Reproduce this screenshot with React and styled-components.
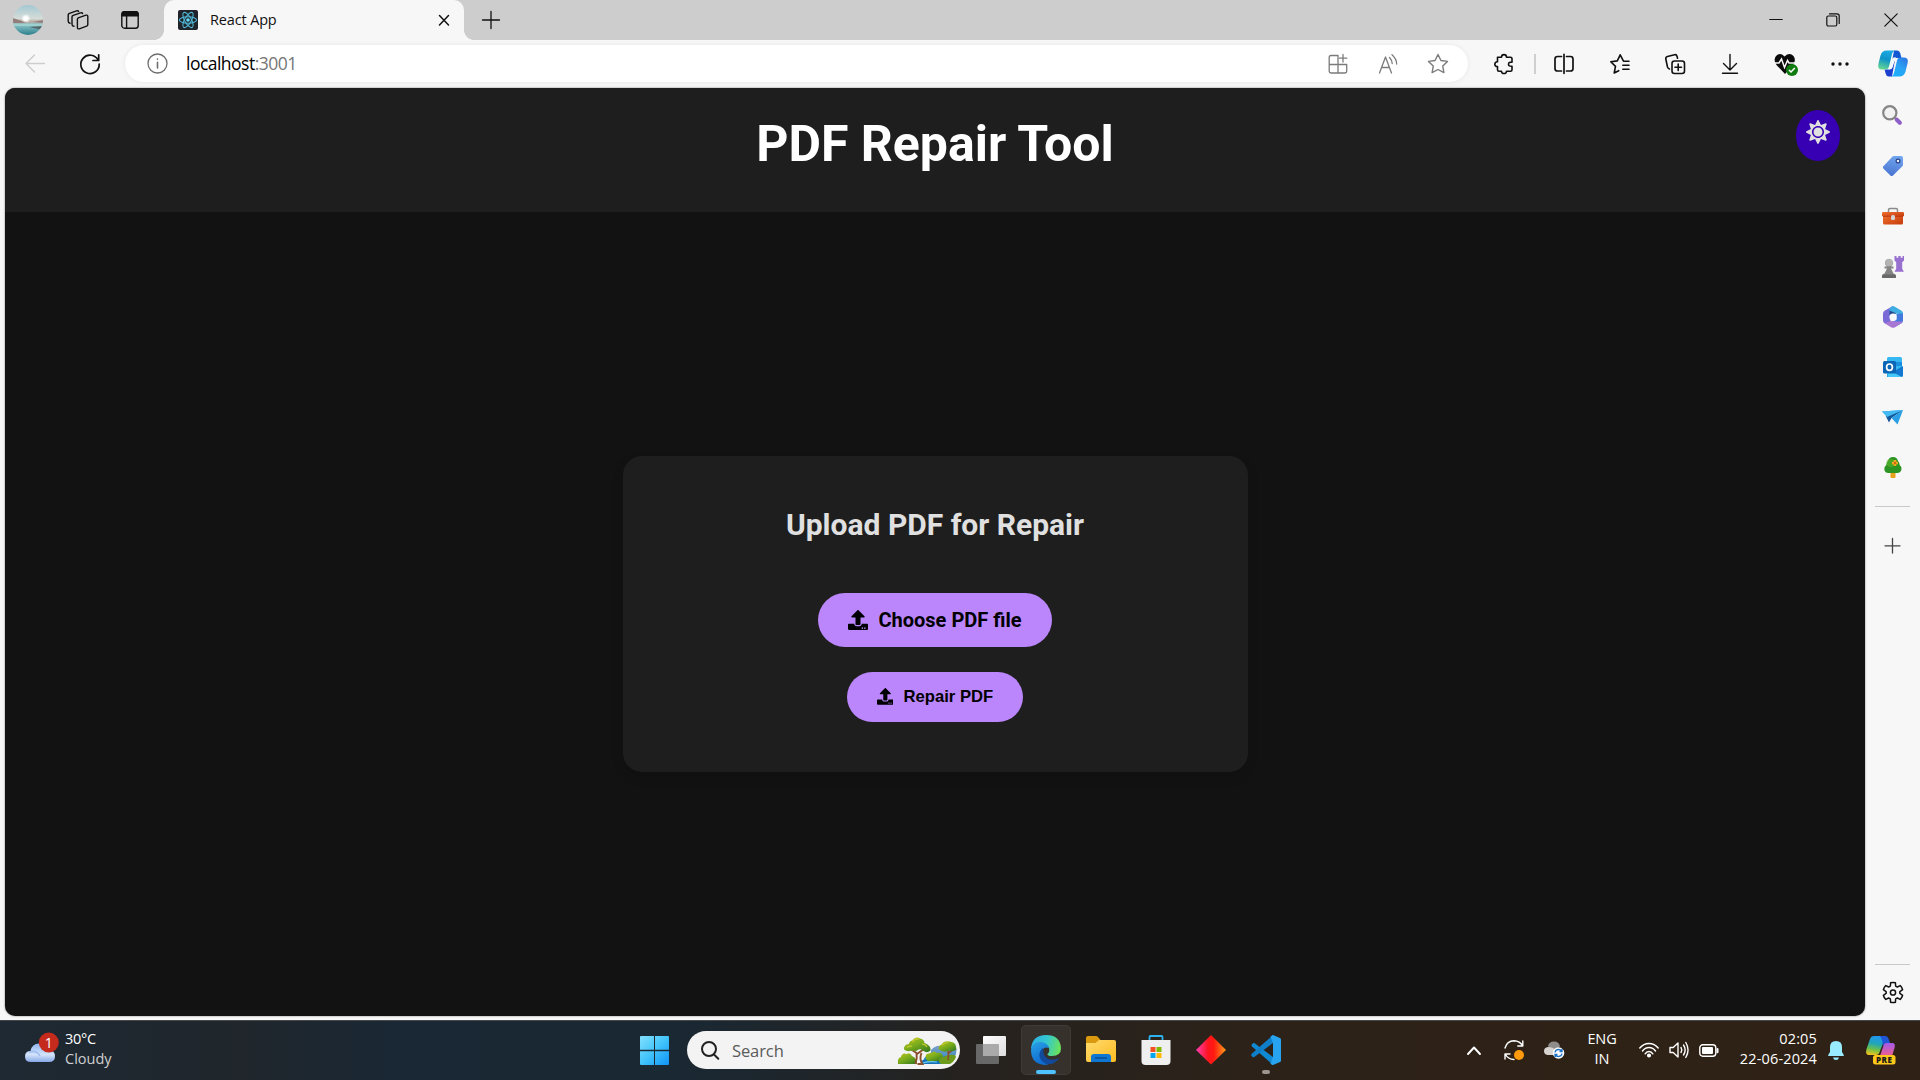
import React from "react";
import styled, { createGlobalStyle } from "styled-components";
import { FaUpload, FaSun } from "react-icons/fa";

const Global = createGlobalStyle`
  * { box-sizing: border-box; }
  body { margin: 0; background: #f7f7f7; overflow: hidden; }
  button { font-family: inherit; border: 0; padding: 0; background: none; color: inherit; }
`;

const ui = `"Open Sans", "Noto Sans", sans-serif`;

const Screen = styled.div`
  width: 1920px;
  height: 1080px;
  display: flex;
  flex-direction: column;
  background: #f7f7f7;
  font-family: ${ui};
  color: #111;
`;

const Slot = styled.div`
  width: ${(p) => p.$w}px;
  height: 100%;
  flex: none;
  display: flex;
  align-items: center;
  justify-content: center;
`;
const Spacer = styled.div`
  flex: 1;
`;
const Glyph = styled.svg`
  display: block;
  flex: none;
  overflow: visible;
  fill: none;
  stroke: ${(p) => p.$color || "#111"};
  stroke-width: ${(p) => p.$stroke || 1.4};
  stroke-linecap: round;
  stroke-linejoin: round;
`;
const Picture = styled.svg`
  display: block;
  flex: none;
  overflow: visible;
`;
const Icon = ({ w = 20, h = w, color, stroke, children }) => (
  <Glyph width={w} height={h} viewBox={`0 0 ${w} ${h}`} $color={color} $stroke={stroke}>
    {children}
  </Glyph>
);
const Art = ({ w, h = w, children }) => (
  <Picture width={w} height={h} viewBox={`0 0 ${w} ${h}`}>
    {children}
  </Picture>
);

/* ---------- title bar ---------- */
const TitleBar = styled.header`
  height: 40px;
  flex: none;
  display: flex;
  background: #cdcdcd;
`;
const Tab = styled.div`
  position: relative;
  width: 300px;
  margin-left: 3px;
  padding: 0 14px 0 14px;
  display: flex;
  align-items: center;
  background: #f7f7f7;
  border-radius: 10px 10px 0 0;
  &::before,
  &::after {
    content: "";
    position: absolute;
    bottom: 0;
    width: 10px;
    height: 10px;
  }
  &::before {
    left: -10px;
    background: radial-gradient(circle at 0 0, #cdcdcd 9.6px, #f7f7f7 10.2px);
  }
  &::after {
    right: -10px;
    background: radial-gradient(circle at 100% 0, #cdcdcd 9.6px, #f7f7f7 10.2px);
  }
`;
const TabTitle = styled.span`
  flex: 1;
  margin-left: 12px;
  font-size: 14.5px;
  letter-spacing: -0.15px;
  line-height: 20px;
`;

const Avatar = () => (
  <Art w={30}>
    <defs>
      <linearGradient id="sky" x1="0" y1="0" x2="0" y2="1">
        <stop offset="0" stopColor="#a3c8d3" />
        <stop offset=".45" stopColor="#d6dcd8" />
        <stop offset=".56" stopColor="#b9a9a0" />
        <stop offset=".64" stopColor="#8fc6c9" />
        <stop offset="1" stopColor="#2b7f8c" />
      </linearGradient>
      <clipPath id="round"><circle cx="15" cy="15" r="15" /></clipPath>
    </defs>
    <g clipPath="url(#round)">
      <rect width="30" height="30" fill="url(#sky)" />
      <path d="M0 13l9 3 5 2H0zM30 15l-10 2 10 1z" fill="#927f7c" />
      <path d="M0 19h30v2H0z" fill="#9fd0d0" />
      <path d="M30 21l-14 1 14 3z" fill="#54676b" />
      <circle cx="12.8" cy="13.5" r="4" fill="#fff" opacity=".5" />
      <circle cx="12.8" cy="13.5" r="2.5" fill="#fff" />
    </g>
  </Art>
);
const Workspaces = () => (
  <Icon w={22} h={20} stroke={1.4}>
    <path d="M11.2 7.8l7.8-2.6q1.8-.5 1.800 1.300v8q0 1.300-1.200 1.700l-7.300 2.600q-1.900.5-1.900-1.300v-8q0-1.200.8-1.700z" />
    <path d="M7 16.200q-2-.2-2-2V7q0-1.300 1.200-1.700L13.500 2.900q1.700-.4 2.100.7" />
    <path d="M3 13.300q-1.800-.4-1.800-2V5q0-1.300 1.200-1.700L9.600.9q1.600-.4 2 .6" />
  </Icon>
);
const TabActions = () => (
  <Icon w={18} h={18} stroke={1.4}>
    <rect x=".8" y=".8" width="16.400" height="16.400" rx="2.800" />
    <path d="M1 4.800V3q0-2.200 2.200-2.200h11.600Q17 .8 17 3v1.800z" fill="#111" />
    <path d="M5.600 5v12" />
  </Icon>
);
const ReactLogo = () => (
  <Art w={20}>
    <rect width="20" height="20" rx="2" fill="#20232a" />
    <g fill="none" stroke="#4fb8d6" strokeWidth="1.050">
      <ellipse cx="10" cy="10" rx="8.600" ry="3.300" />
      <ellipse cx="10" cy="10" rx="8.600" ry="3.300" transform="rotate(60 10 10)" />
      <ellipse cx="10" cy="10" rx="8.600" ry="3.300" transform="rotate(120 10 10)" />
    </g>
    <circle cx="10" cy="10" r="1.800" fill="#61dafb" />
  </Art>
);

/* ---------- tool bar ---------- */
const ToolBar = styled.nav`
  height: 48px;
  flex: none;
  display: flex;
  padding: 0 0 1px 8px;
`;
const AddressBar = styled.div`
  width: 1343px;
  height: 37px;
  margin: 5px 7px 0 7px;
  padding-left: 22px;
  flex: none;
  display: flex;
  align-items: center;
  background: #fff;
  border-radius: 19px;
  box-shadow: 0 0 5px rgba(0, 0, 0, 0.07);
`;
const Url = styled.div`
  margin-left: 18px;
  padding-bottom: 2px;
  font-size: 17.500px;
  letter-spacing: -0.52px;
  line-height: 24px;
  color: #000;
  span { color: #767676; }
`;
const Rule = styled.div`
  width: 2px;
  height: 20px;
  background: #cfcfcf;
`;

const CopilotLogo = () => (
  <Art w={30} h={27}>
    <defs>
      <linearGradient id="cpa" x1="0.3" y1="0" x2="0" y2="1">
        <stop offset="0" stopColor="#1aa8e0" />
        <stop offset=".4" stopColor="#0f93c9" />
        <stop offset="1" stopColor="#6fe08a" />
      </linearGradient>
      <linearGradient id="cpb" x1="1" y1="0" x2="0.2" y2="1">
        <stop offset="0" stopColor="#2b6fe0" />
        <stop offset=".5" stopColor="#2aa3f5" />
        <stop offset="1" stopColor="#17b2ff" />
      </linearGradient>
    </defs>
    <path d="M16 .5h3.200q2.300 0 3 2.500l1.300 5H18q-2.500 0-3.400 3L13 17z" fill="#1459d2" />
    <path d="M14 26.500h-3.200q-2.300 0-3-2.500l-1.300-4.500H11q2.500 0 3.400-3L17 10l-1.500 8z" fill="#1c3fd0" />
    <path d="M20 .5h-2.500q-2.500 0-3.500 3.500l-3 12.500q-.8 3-3.500 3H4q-5 0-3.500-6l2-8Q4 .5 8.500.5z" fill="url(#cpa)" />
    <path d="M10 26.500h2.500q2.500 0 3.500-3.500l3-12.500q.8-3 3.500-3H26q5 0 3.500 6l-2 8Q26 26.500 21.500 26.500z" fill="url(#cpb)" />
    <path d="M14.300 8.500q1-1.300 3.900-1.200-1.200 1-1.800 3.200l-1.800 7q-.6 2-3.800 2 1.200-.8 1.700-3z" fill="#f4fbff" />
  </Art>
);

/* ---------- body ---------- */
const Body = styled.div`
  height: 932px;
  flex: none;
  display: flex;
  padding-left: 5px;
`;
const Page = styled.main`
  width: 1860px;
  height: 927.500px;
  flex: none;
  display: flex;
  flex-direction: column;
  overflow: hidden;
  border-radius: 10px;
  background: #121212;
  box-shadow: 0 0 2px rgba(0, 0, 0, 0.55);
  font-family: Roboto, sans-serif;
`;
const PageHeader = styled.div`
  position: relative;
  height: 124px;
  flex: none;
  padding-top: 26px;
  background: #1e1e1e;
  text-align: center;
`;
const PageTitle = styled.h1`
  margin: 0;
  font-size: 50px;
  font-weight: 700;
  line-height: 60px;
  color: #fff;
`;
const ThemeToggle = styled.button`
  position: absolute;
  top: 22px;
  right: 25px;
  width: 44px;
  height: 50.500px;
  padding-bottom: 6px;
  display: flex;
  align-items: center;
  justify-content: center;
  border-radius: 50%;
  background: #3700b3;
  color: #e0e0e0;
  font-size: 24px;
`;
const Content = styled.div`
  flex: 1;
  display: flex;
  align-items: center;
  justify-content: center;
`;
const Card = styled.section`
  width: 625px;
  height: 316px;
  padding-top: 51px;
  display: flex;
  flex-direction: column;
  align-items: center;
  background: #1e1e1e;
  border-radius: 19px;
  box-shadow: 0 5px 12px rgba(0, 0, 0, 0.12);
`;
const CardTitle = styled.h2`
  margin: 0;
  font-size: 30px;
  font-weight: 700;
  line-height: 36px;
  color: #e0e0e0;
`;
const Pill = styled.button`
  height: ${(p) => (p.$large ? 54 : 50)}px;
  margin-top: ${(p) => (p.$large ? 50 : 25)}px;
  padding: 0 30px;
  display: flex;
  align-items: center;
  gap: 10px;
  border-radius: 31px;
  background: #bb86fc;
  color: #000;
  font: ${(p) => (p.$large ? `700 20px Roboto` : `700 16.667px "Liberation Sans"`)}, sans-serif;
`;

/* ---------- side bar ---------- */
const SideBar = styled.aside`
  width: 55px;
  padding: 2.700px 0 0 0;
  display: flex;
  flex-direction: column;
  align-items: center;
`;
const SideSlot = styled.div`
  width: 55px;
  height: ${(p) => p.$h || 50.250}px;
  flex: none;
  display: flex;
  align-items: center;
  justify-content: center;
`;
const SideRule = styled.div`
  width: 35px;
  height: 1px;
  flex: none;
  margin-top: ${(p) => p.$top || 0}px;
  background: #c9c9c9;
`;

const SearchArt = () => (
  <Art w={22}>
    <circle cx="7.800" cy="7.800" r="6.600" fill="#f1f1f1" stroke="#858585" strokeWidth="2.200" />
    <path d="M12.700 12.700l2.500 2.500" stroke="#858585" strokeWidth="2.200" />
    <path d="M14.800 14.800l3 2.900" stroke="#8d5fc9" strokeWidth="4.200" strokeLinecap="round" />
  </Art>
);
const TagArt = () => (
  <Art w={22}>
    <defs>
      <linearGradient id="tag" x1=".6" y1="0" x2=".4" y2="1">
        <stop offset="0" stopColor="#71a5ee" /><stop offset="1" stopColor="#4874d1" />
      </linearGradient>
    </defs>
    <path d="M12 1h7q2 0 2 2v6.500q0 1-.7 1.700L11 20.400q-1.300 1.200-2.600 0l-7-6.800q-1.100-1.200 0-2.400L10.500 1.600Q11.100 1 12 1z" fill="url(#tag)" />
    <circle cx="16" cy="6" r="1.900" fill="#e8f0ff" stroke="#243f86" strokeWidth="1.200" />
  </Art>
);
const ToolboxArt = () => (
  <Art w={22} h={18}>
    <defs>
      <linearGradient id="box" x1="0" y1="0" x2="1" y2="1">
        <stop offset="0" stopColor="#f0702f" /><stop offset="1" stopColor="#c63c0d" />
      </linearGradient>
    </defs>
    <path d="M6.500 5V3q0-1.500 1.500-1.500h6q1.500 0 1.500 1.500v2" fill="none" stroke="#8a8a8a" strokeWidth="1.500" />
    <rect x="1" y="7" width="20" height="10.500" rx="1.500" fill="url(#box)" />
    <rect x="0" y="5" width="22" height="4.500" rx="1.200" fill="url(#box)" />
    <path d="M1 8.800h20v.9H1z" fill="#b93a10" />
    <rect x="9" y="8" width="4" height="5" rx="1.500" fill="#d4d4d4" />
  </Art>
);
const ChessArt = () => (
  <Art w={22}>
    <path d="M12.500 0h2v1.700h1.800V0h2.400v1.700h1.800V0h1.500v4.500l-1.800 1.800v6.500l1.700 3h-9.400l1.700-3V6.300l-1.700-1.800z" fill="#9870cf" />
    <path d="M0 22v-2q0-2 2.500-2.500L5 12.500H2.500v-2H5a4 4 0 1 1 4 0h2.500v2H9l2.500 5q2.500.5 2.500 2.500v2z" fill="#858585" />
    <circle cx="7" cy="6.500" r="3.800" fill="#b3b3b3" />
    <rect y="18.500" width="14" height="3.500" rx="1.500" fill="#696969" />
  </Art>
);
const OfficeArt = () => (
  <Art w={20} h={22}>
    <path d="M10 0L2 4.500Q0 5.500 0 7.500v7q0 2 2 3l5.500-1.500V8L12 3z" fill="#7a6ad8" />
    <path d="M8.500.6Q10-.3 11.500.6L18.500 4.700Q20 5.600 20 7.500V12l-6-4.500L6.500 9V4q0-2.400 2-3.400z" fill="#3dade2" />
    <path d="M20 7.500v7q0 1.900-1.500 2.800L12 21l-3.500-5 5-2V8z" fill="#4379dd" />
    <path d="M1.500 17.300l6-2.300 5.500.5h6.500q-.3 1.200-1.200 1.700l-6.800 4.200q-1.500.8-3 0z" fill="#a877d4" />
    <path d="M6.500 9.500V4.500L13.500 7.500l-4 .5z" fill="#27458d" />
    <circle cx="10" cy="11" r="3.600" fill="#f7f9ff" />
  </Art>
);
const OutlookArt = () => (
  <Art w={20}>
    <rect x="4" width="15" height="14" rx="1.500" fill="#35b8f1" />
    <path d="M4 5h15v4H4z" fill="#1a8fe0" />
    <path d="M20 9v9.500q0 1.500-1.500 1.500H4v-3l9-4z" fill="#1378cf" />
    <path d="M4 12l15 8H4.500z" fill="#45c7f7" />
    <rect y="4" width="13" height="12.500" rx="1.500" fill="#0b66b5" />
    <ellipse cx="6.500" cy="10.200" rx="2.900" ry="3.200" fill="none" stroke="#fff" strokeWidth="1.700" />
  </Art>
);
const PlaneArt = () => (
  <Art w={21} h={16}>
    <path d="M0 2.500L21 1 7 9z" fill="#2fa8ea" />
    <path d="M3.500 6.500L7 13.500 9.500 9 21 1 6 7z" fill="#13589c" />
    <path d="M9.500 9L21 1l-5.500 14.500z" fill="#2a9fe5" />
    <path d="M0 2.500L5 8l16-7z" fill="#45b9f2" />
  </Art>
);
const TreeArt = () => (
  <Art w={18} h={21}>
    <path d="M6.500 14h5v6q0 1-1 1h-3q-1 0-1-1z" fill="#eaa21c" />
    <path d="M9 0q4 0 5 4 1.500 1.500 1.700 4Q18 9.500 17.500 12.500 16.500 16 13 16H4.500Q1 16 .3 12.500 0 9.500 2.300 8q.2-2.500 1.700-4Q5 0 9 0z" fill="#2c9422" />
    <circle cx="6.500" cy="6" r="4" fill="#5cb52b" opacity=".6" />
    <path d="M11 3v6M8 6h6" stroke="#f5a81c" strokeWidth="2.600" />
    <circle cx="11" cy="6" r="1.100" fill="#c8501a" />
  </Art>
);

const gearPath = Array.from({ length: 6 }, (_, i) => {
  const pt = (r, deg) => {
    const a = ((deg + i * 60 - 90) * Math.PI) / 180;
    return `${(10 + r * Math.cos(a)).toFixed(2)} ${(10.5 + r * Math.sin(a)).toFixed(2)}`;
  };
  return `${i ? "L" : "M"}${pt(7, -22)}L${pt(10, -14)}Q${pt(10.4, 0)} ${pt(10, 14)}L${pt(7, 22)}Q${pt(6.6, 30)} ${pt(7, 38)}`;
}).join("") + "Z";

/* ---------- task bar ---------- */
const TaskBar = styled.footer`
  height: 60px;
  flex: none;
  display: flex;
  align-items: center;
  padding-bottom: 1px;
  border-top: 1px solid #45484b;
  background: linear-gradient(90deg, #1e2933 0, #20262c 240px, #1a2835 400px, #1a2833 680px, #25221f 960px, #2d2218 1300px, #2f2115 1920px);
  color: #fff;
`;
const Weather = styled.div`
  width: 639px;
  height: 58px;
  flex: none;
  padding-left: 25px;
  display: flex;
  align-items: center;
  gap: 8px;
`;
const WeatherText = styled.div`
  padding-bottom: 2px;
  font-size: 14.500px;
  line-height: 20px;
  span { display: block; letter-spacing: -0.25px; }
  span + span { color: #cfd0d1; letter-spacing: 0; }
`;
const WeatherIcon = styled.div`
  padding-bottom: 7px;
`;
const SearchBox = styled.div`
  width: 273px;
  height: 38px;
  margin: 0 16px 0 18px;
  padding: 0 3px 0 14px;
  flex: none;
  display: flex;
  align-items: center;
  background: #f3f3f3;
  border-radius: 19px;
  overflow: hidden;
`;
const SearchLabel = styled.span`
  flex: 1;
  margin-left: 13px;
  font-size: 16.500px;
  letter-spacing: -0.1px;
  color: #5a5a5a;
`;
const TaskApp = styled.div`
  width: 50px;
  height: 50px;
  margin-right: 5px;
  flex: none;
  display: flex;
  flex-direction: column;
  align-items: center;
  padding-top: 10px;
  border-radius: 5px;
  background: ${(p) => (p.$active ? "rgba(255,255,255,.07)" : "transparent")};
  box-shadow: ${(p) => (p.$active ? "inset 0 0 0 1px rgba(255,255,255,.05)" : "none")};
`;
const RunMark = styled.i`
  width: ${(p) => (p.$active ? 20 : 8)}px;
  height: 4px;
  margin-top: 5px;
  border-radius: 2px;
  background: ${(p) => (p.$active ? "#4cc2ff" : "#9c958f")};
`;
const TrayText = styled.div`
  width: ${(p) => p.$w}px;
  flex: none;
  padding-bottom: 2px;
  font-size: 14.500px;
  line-height: 20px;
  letter-spacing: ${(p) => p.$ls || 0}px;
  text-align: ${(p) => p.$align || "center"};
  white-space: nowrap;
`;

const WeatherArt = () => (
  <WeatherIcon>
    <Art w={32}>
      <defs>
        <linearGradient id="cloud" x1="0" y1="0" x2="0" y2="1">
          <stop offset="0" stopColor="#8fb5f0" /><stop offset=".6" stopColor="#d3e3fb" /><stop offset="1" stopColor="#86a9e6" />
        </linearGradient>
      </defs>
      <path d="M6 31q-6 0-6-5.500T5.500 20Q7 12.500 14 12.500T23 19q7 0 7 6t-6 6z" fill="url(#cloud)" />
      <path d="M4 21q8-2 11 4" fill="none" stroke="#9dbcf0" strokeWidth="1.500" />
      <circle cx="23.800" cy="11.500" r="10" fill="#c42b1c" />
      <text x="23.800" y="16.500" textAnchor="middle" fontSize="14" fill="#fff" fontFamily="Open Sans">1</text>
    </Art>
  </WeatherIcon>
);
const StartArt = () => (
  <Art w={29}>
    <defs>
      <linearGradient id="win" x1="0" y1="0" x2="1" y2="1">
        <stop offset="0" stopColor="#82e0fd" /><stop offset=".5" stopColor="#42c4fb" /><stop offset="1" stopColor="#0f93f5" />
      </linearGradient>
    </defs>
    <path d="M1 0h13v13.800H0V1q0-1 1-1zM15 0h13q1 0 1 1v12.800H15zM0 15.200h14V29H1q-1 0-1-1zM15 15.200h14V28q0 1-1 1H15z" fill="url(#win)" />
  </Art>
);
const ParkArt = () => (
  <Art w={60} h={30}>
    <defs>
      <linearGradient id="leaf" x1="0" y1="0" x2=".8" y2="1">
        <stop offset="0" stopColor="#bcc41b" /><stop offset=".5" stopColor="#7dae1c" /><stop offset="1" stopColor="#3b7d1e" />
      </linearGradient>
      <linearGradient id="lake" x1="0" y1="0" x2="0" y2="1">
        <stop offset="0" stopColor="#7f9fc9" /><stop offset="1" stopColor="#1f86c8" />
      </linearGradient>
    </defs>
    <path d="M34 15q5-5 10-4h15q1 4 0 8-3 7-8 10H24l4-7q7-2 6-7z" fill="url(#lake)" />
    <path d="M24 26q8-4 14-1 6-1 10-4v4l-6 4H24z" fill="#1471b5" />
    <path d="M26 28q6-2 14-1" stroke="#70cdf2" strokeWidth="1.200" fill="none" />
    <path d="M1 29q-1-6 3-7 1-5 6-3 3-2 5 2 5 2 5 8z" fill="url(#leaf)" />
    <path d="M29 24q-2-6 5-6 3-3 6 0 6-1 6 5l-4 3h-8q-3 1-5-2z" fill="url(#leaf)" />
    <path d="M42 27q-1-4 4-5 5-3 12-2l1 2q-2 5-6 7h-9z" fill="#6d9b1d" />
    <path d="M18.500 29q2-6 1-11l-6-4M20 19l7-5M20.500 29h5q-3.500-5-1-11" stroke="#8c4f2b" strokeWidth="1.900" fill="none" />
    <path d="M51 25q1-5 0-9M51.500 18l3-2" stroke="#8c4f2b" strokeWidth="1.700" fill="none" />
    <path d="M7 14.500q-.5-5 5-5.500 0-2.500 3-3.500 4-5 8-2 4 .5 4.500 4.500 7 2.500 6 7.500-3.500 3-7 .5-2-2.500-5-1.500-3 3-7 1-4 2-7.500-1z" fill="url(#leaf)" />
    <path d="M41.500 14q0-3.500 3-4.500 2.500-4 8-3 4.500.5 6 3l.8 5q-3 3-7 1-6 3-10.800-1.500z" fill="url(#leaf)" />
    <path d="M15 7q3-4 7-3M45 10q3-2.500 6-2.500M10 12.500q3-2 5-1M25 9q3 0 5 3" stroke="#c9cc30" strokeWidth="1.200" fill="none" />
  </Art>
);
const EdgeArt = () => (
  <Art w={30}>
    <defs>
      <linearGradient id="ea" x1="0" y1=".3" x2="1" y2=".5">
        <stop offset="0" stopColor="#2eaee6" /><stop offset=".5" stopColor="#33c7cf" /><stop offset="1" stopColor="#6be35a" />
      </linearGradient>
      <linearGradient id="eb" x1="0" y1="0" x2=".4" y2="1">
        <stop offset="0" stopColor="#2aa3e6" /><stop offset="1" stopColor="#0e6bd0" />
      </linearGradient>
    </defs>
    <path d="M0 14Q1 0 15 0q14 0 15 13 0 8-9 8-5 0-4.500-2 2.500-2 1.500-6Q12 3 0 14z" fill="url(#ea)" />
    <path d="M0 15Q2 6 10 7q7 1 8 6-5-2-7.500 3Q9 24 18 28.500 16 30 14 30 0 29 0 15z" fill="url(#eb)" />
    <path d="M11.500 13Q6 19 10 25q5 6 12 3.500 4-2 6.500-6-6 4-12 1-5-3.500-4-9z" fill="#114a9c" />
  </Art>
);
const TrayCopilot = () => (
  <Art w={30} h={29}>
    <defs>
      <linearGradient id="ta" x1=".5" y1="0" x2=".3" y2="1">
        <stop offset="0" stopColor="#2196f3" /><stop offset=".4" stopColor="#20a6b5" /><stop offset=".7" stopColor="#6cc04a" /><stop offset="1" stopColor="#f2c21b" />
      </linearGradient>
      <linearGradient id="tb" x1="0" y1="0" x2="0" y2="1">
        <stop offset="0" stopColor="#a35bea" /><stop offset="1" stopColor="#ee5f8d" />
      </linearGradient>
    </defs>
    <path d="M8 0h12L14 15q-1 4-4 4H3Q-1 19 .5 13L4 3Q5 0 8 0z" fill="url(#ta)" />
    <path d="M14 0h5q3 0 4 4l1 3h-3q-3 0-4 3l-1-6z" fill="#1f55d6" />
    <path d="M20 7h6q4 0 2.500 5L26 20H14l3-9q1-4 3-4z" fill="url(#tb)" />
    <rect x="7" y="19" width="22.500" height="9.500" rx="2.500" fill="#ffc81a" />
    <text x="18.300" y="26.700" textAnchor="middle" fontSize="8" fontWeight="800" letterSpacing=".6" fill="#1a1a1a" fontFamily="Open Sans">PRE</text>
  </Art>
);

const starPath = (s) =>
  Array.from({ length: 10 }, (_, i) => {
    const r = i % 2 ? s * 0.5 : s;
    const a = (i * 36 - 90) * (Math.PI / 180);
    return `${i ? "L" : "M"}${(10 + r * Math.cos(a)).toFixed(2)} ${(10.5 + r * Math.sin(a)).toFixed(2)}`;
  }).join("") + "Z";

export default function App() {
  return (
    <Screen>
      <Global />
      <TitleBar>
        <Slot $w={56}><Avatar /></Slot>
        <Slot $w={43}><Workspaces /></Slot>
        <Slot $w={62}><TabActions /></Slot>
        <Tab>
          <ReactLogo />
          <TabTitle>React App</TabTitle>
          <Icon w={12} stroke={1.5}><path d="M1.500 1.500l9 9.500M10.500 1.500l-9 9.500" /></Icon>
        </Tab>
        <Slot $w={53}><Icon w={18} stroke={1.300}><path d="M9 .5v17M.5 9h17" /></Icon></Slot>
        <Spacer />
        <Slot $w={56}><Icon w={14} stroke={1.200}><path d="M.8 6.500h12.400" /></Icon></Slot>
        <Slot $w={58}>
          <Icon w={14} stroke={1.200}>
            <rect x=".8" y="3" width="10" height="10" rx="1.500" />
            <path d="M3.500.8H11q2.200 0 2.200 2.200v7.500" />
          </Icon>
        </Slot>
        <Slot $w={58}><Icon w={14} stroke={1.200}><path d="M.8.8l12.400 12.400M13.200.8L.8 13.200" /></Icon></Slot>
      </TitleBar>

      <ToolBar>
        <Slot $w={54}><Icon color="#cdcdcd"><path d="M19.500 9.500H1M9.500 1L1 9.500 9.500 18" /></Icon></Slot>
        <Slot $w={56}><Icon stroke={1.700}><path d="M18.200 6.200A9.200 9.200 0 1 0 19.200 10M18.700.8v5.700H13" /></Icon></Slot>
        <AddressBar>
          <Icon w={21} color="#6e6e6e" stroke={1.300}>
            <circle cx="10.500" cy="10.500" r="9.500" />
            <path d="M10.500 9.300v5.700M10.500 6v.3" strokeWidth="1.600" />
          </Icon>
          <Url>localhost<span>:3001</span></Url>
          <Spacer />
          <Slot $w={50}>
            <Icon color="#7b7b7b" stroke={1.300}>
              <path d="M10 1.500H3q-1.800 0-1.800 1.800v14q0 1.700 1.800 1.700h14q1.700 0 1.700-1.700v-6.800H1.200M10 1.500V19M15 .5v7.500M11.500 4.200h7.300" />
            </Icon>
          </Slot>
          <Slot $w={50}>
            <Icon color="#7b7b7b" stroke={1.300}>
              <path d="M1.500 19L7.500 3l6 16M3.500 13.500h8M11.500 3.500q2.500 2.500 2.700 6M14 .8q4.500 4 4.700 9.200" />
            </Icon>
          </Slot>
          <Slot $w={50}><Icon color="#7b7b7b"><path d={starPath(10)} /></Icon></Slot>
          <Slot $w={5} />
        </AddressBar>
        <Slot $w={57}>
          <Icon stroke={1.600}>
            <path d="M3.500 3.200h4q0-2.600 2.500-2.600t2.500 2.600h4q1.500 0 1.500 1.500v3.500q-3.500-.3-3.500 2t3.500 2v3.500q0 1.500-1.500 1.500h-4q0 2.300-2.500 2.300t-2.500-2.300h-2.500q-1.500 0-1.500-1.500v-3.200Q.8 12.500.8 10.200T3.500 7.700z" />
          </Icon>
        </Slot>
        <Slot $w={5}><Rule /></Slot>
        <Slot $w={53}>
          <Icon stroke={1.700}><path d="M7.500 2.500h-4Q1 2.500 1 5v9.500Q1 17 3.500 17h4M12.500 2.500h4Q19 2.500 19 5v9.500q0 2.500-2.500 2.500h-4M10 .3v19" /></Icon>
        </Slot>
        <Slot $w={60}>
          <Icon stroke={1.600}>
            <path d="M18.500 7.200h-5L10.200.8 7.300 6.900.8 7.800l4.700 4.600-1.300 6.600 4.500-2.300M12.800 11.200H19M12.800 15.200H19M14.500 7.200H19" />
          </Icon>
        </Slot>
        <Slot $w={50}>
          <Icon stroke={1.600}>
            <rect x="7" y="7" width="12.500" height="12.500" rx="2.500" />
            <path d="M13.200 10v6.500M10 13.200h6.500M4.500 15Q3 14.500 2.500 13L.8 5Q.5 3 2.500 2.500l7-1.800q2-.4 2.500 1.500l.5 2" />
          </Icon>
        </Slot>
        <Slot $w={60}><Icon><path d="M10 .5v15M3.500 9.500L10 16l6.500-6.500M2.500 19.300h15" /></Icon></Slot>
        <Slot $w={52}>
          <Art w={24} h={24}>
            <path d="M11 22L2.500 13Q-1 8 2 4q4-4 8.500.5Q15.500 0 19.500 4q3 4-.5 9z" fill="#0b0b0b" />
            <path d="M0 11h5l2.500-4 3 8.500 3-7 1.500 2.500h6" stroke="#f7f7f7" strokeWidth="1.500" fill="none" />
            <circle cx="18" cy="18" r="6" fill="#107c10" />
            <path d="M15 18l2 2 3.800-4" stroke="#fff" strokeWidth="1.500" fill="none" />
          </Art>
        </Slot>
        <Slot $w={55}>
          <Art w={18} h={4}><circle cx="2" cy="2" r="1.700" fill="#111" /><circle cx="9" cy="2" r="1.700" fill="#111" /><circle cx="16" cy="2" r="1.700" fill="#111" /></Art>
        </Slot>
        <Slot $w={52}><CopilotLogo /></Slot>
      </ToolBar>

      <Body>
        <Page>
          <PageHeader>
            <PageTitle>PDF Repair Tool</PageTitle>
            <ThemeToggle aria-label="Toggle theme"><FaSun /></ThemeToggle>
          </PageHeader>
          <Content>
            <Card>
              <CardTitle>Upload PDF for Repair</CardTitle>
              <Pill $large><FaUpload />Choose PDF file</Pill>
              <Pill><FaUpload />Repair PDF</Pill>
            </Card>
          </Content>
        </Page>
        <SideBar>
          <SideSlot><SearchArt /></SideSlot>
          <SideSlot><TagArt /></SideSlot>
          <SideSlot><ToolboxArt /></SideSlot>
          <SideSlot><ChessArt /></SideSlot>
          <SideSlot><OfficeArt /></SideSlot>
          <SideSlot><OutlookArt /></SideSlot>
          <SideSlot><PlaneArt /></SideSlot>
          <SideSlot><TreeArt /></SideSlot>
          <SideRule $top={13.300} />
          <SideSlot $h={78}><Icon w={16} color="#444" stroke={1.300}><path d="M7.500.5v14.500M0 7.800h15" /></Icon></SideSlot>
          <Spacer />
          <SideRule />
          <SideSlot $h={55}>
            <Icon w={20} h={21} stroke={1.500}><path d={gearPath} /><circle cx="10" cy="10.500" r="2.600" /></Icon>
          </SideSlot>
        </SideBar>
      </Body>

      <TaskBar>
        <Weather>
          <WeatherArt />
          <WeatherText><span>30°C</span><span>Cloudy</span></WeatherText>
        </Weather>
        <Slot $w={30}><StartArt /></Slot>
        <SearchBox>
          <Icon w={18} color="#222" stroke={2}><circle cx="8" cy="8" r="7" /><path d="M13 13.500l4.300 4.300" /></Icon>
          <SearchLabel>Search</SearchLabel>
          <ParkArt />
        </SearchBox>
        <Slot $w={30}>
          <Art w={30} h={28}>
            <defs><linearGradient id="tv" x1="0" y1="0" x2="1" y2="1"><stop offset="0" stopColor="#fff" /><stop offset="1" stopColor="#ddd" /></linearGradient></defs>
            <rect y="8" width="23" height="20" rx="1" fill="#686868" />
            <rect x="7" width="23" height="20" rx="1" fill="url(#tv)" />
            <path d="M7 8h15q1 0 1 1v11H7z" fill="#aaa" />
          </Art>
        </Slot>
        <Slot $w={15} />
        <TaskApp $active><EdgeArt /><RunMark $active /></TaskApp>
        <TaskApp>
          <Art w={30} h={28}>
            <defs><linearGradient id="fo" x1="0" y1="0" x2="1" y2="1"><stop offset="0" stopColor="#ffdb6e" /><stop offset="1" stopColor="#fdbb21" /></linearGradient></defs>
            <path d="M0 3q0-2 2-2h8q1 0 2 1l2.500 3H28v8H0z" fill="#d99a10" />
            <path d="M0 8q6 0 9.500 0L13 5h15q2 0 2 2v18q0 2-2 2H2q-2 0-2-2z" fill="url(#fo)" />
            <path d="M5 27v-5q0-3 3-3h14q3 0 3 3v5z" fill="#0f77d1" />
            <path d="M9 23h12" stroke="#0a4c93" strokeWidth="1.500" />
          </Art>
        </TaskApp>
        <TaskApp>
          <Art w={30} h={30}>
            <path d="M8.500 6V2q0-1 1-1h11q1 0 1 1v4" fill="none" stroke="#2bb3f0" strokeWidth="1.800" />
            <path d="M.5 5h29v21q0 4-4 4h-21q-4 0-4-4z" fill="#efefef" />
            <path d="M9.500 12h5v5h-5z" fill="#f25022" /><path d="M15.500 12h5v5h-5z" fill="#7fba00" />
            <path d="M9.500 18h5v5h-5z" fill="#00a4ef" /><path d="M15.500 18h5v5h-5z" fill="#ffb900" />
          </Art>
        </TaskApp>
        <TaskApp>
          <Art w={30} h={30}>
            <defs><linearGradient id="di"><stop offset="0" stopColor="#ff3fb4" /><stop offset=".4" stopColor="#ff1420" /><stop offset=".6" stopColor="#ff1a10" /><stop offset="1" stopColor="#ffa01a" /></linearGradient></defs>
            <path d="M15 0l15 15-15 14.500L0 15z" fill="url(#di)" />
          </Art>
        </TaskApp>
        <TaskApp>
          <Art w={30} h={30}>
            <path d="M1 9l2-1.300L22 22v8L1 11.500q-.9-1.200 0-2.500z" fill="#1089d3" />
            <path d="M22 0l7 3q1 .5 1 1.500v21q0 1-1 1.500l-7 3q-1 0-2.500-1.500L22 27z" fill="#27a3f0" />
            <path d="M0 20l1.500 2q.8.500 1.800 0L22 8V0L1 18.500z" fill="#0f7fca" />
            <path d="M22 0v30l-2.500-1.500L22 22V8l-2.500-6.500z" fill="#27a3f0" />
          </Art>
          <RunMark />
        </TaskApp>
        <Spacer />
        <Slot $w={40}><Icon w={14} h={9} color="#fff" stroke={1.900}><path d="M1 8l6-6.500L13 8" /></Icon></Slot>
        <Slot $w={40}>
          <Icon color="#fff">
            <path d="M1 8Q3 1 10 .8q6 .2 8.500 5M18.800 1v5h-5M1 19v-5h5M1.500 14.500q2.500 4.700 8.500 5" />
            <circle cx="15" cy="15" r="5" fill="#ff9a0c" stroke="none" />
          </Icon>
        </Slot>
        <Slot $w={40}>
          <Art w={20} h={18}>
            <path d="M4 5q1-4.500 6-4.500 5 0 6 5l-8 5z" fill="#8f8d8c" />
            <path d="M3.500 14Q0 13.500 0 10t4-4q6 0 8 4l2 4z" fill="#d6d3d1" />
            <circle cx="14.500" cy="12" r="5.800" fill="#fff" />
            <path d="M11 11.500q.5-3 3.500-3 2.200 0 3.300 1.500M18 8v2.500h-2.500M18 12.500q-.5 3-3.500 3-2.200 0-3.300-1.500M11 16v-2.500h2.500" stroke="#1870c8" strokeWidth="1.300" fill="none" />
          </Art>
        </Slot>
        <Slot $w={13} />
        <TrayText $w={30} $ls={-0.1}>ENG<br />IN</TrayText>
        <Slot $w={17} />
        <Slot $w={30}>
          <Icon w={20} h={16} color="#fff" stroke={1.500}>
            <path d="M.8 6Q4.500 1.500 10 1.500T19.200 6M3.500 9Q6 5.500 10 5.500T16.500 9M6.200 11.800Q7.500 9.500 10 9.500t3.800 2.300" />
            <circle cx="10" cy="13.500" r="1.300" fill="#fff" />
          </Icon>
        </Slot>
        <Slot $w={30}>
          <Icon w={20} h={18} color="#fff" stroke={1.400}>
            <path d="M1 6.500h3.200L9 2v14l-4.800-4.500H1zM12 6.500q1.600 2.500 0 5M14.500 4q3.300 5 0 10M16.800 1.500q4.500 7.500 0 15" />
          </Icon>
        </Slot>
        <Slot $w={30}>
          <Icon w={20} h={13} color="#fff">
            <rect x=".8" y=".8" width="16" height="11.400" rx="3" />
            <rect x="3" y="3" width="11" height="7" rx="1" fill="#fff" stroke="none" />
            <path d="M18.500 5v3.200" strokeWidth="2" />
          </Icon>
        </Slot>
        <TrayText $w={93} $ls={0.15} $align="right">02:05<br />22-06-2024</TrayText>
        <Slot $w={37}>
          <Art w={16} h={19}>
            <path d="M8 0q6 0 6 6v5l1.800 3q.4 1-.6 1H.8q-1 0-.6-1L2 11V6q0-6 6-6z" fill="#99ebff" />
            <path d="M5 16.500h6q-.5 2.500-3 2.500t-3-2.500z" fill="#99ebff" />
          </Art>
        </Slot>
        <Slot $w={53}><TrayCopilot /></Slot>
        <Slot $w={13} />
      </TaskBar>
    </Screen>
  );
}
